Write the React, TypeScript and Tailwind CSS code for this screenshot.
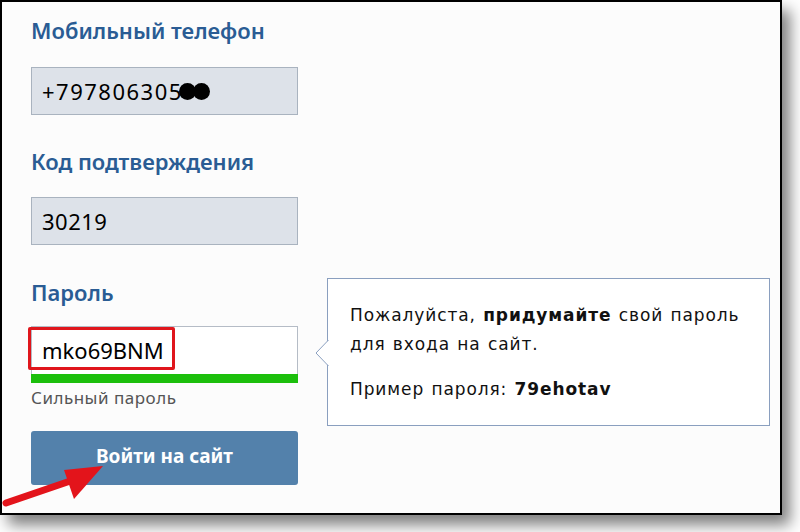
import React from "react";

const labelCls = "text-[22px] leading-[28px] font-semibold text-[#2a5c94]";
const inputCls =
  "w-[267px] h-[48px] border border-[#a9b3bf] bg-[#dde2e9] flex items-center pl-[10px] text-[22px] text-black";

const Arrow = () => (
  <svg className="absolute left-0 top-[455px]" width="110" height="55" viewBox="0 0 110 55">
    <line x1="4" y1="46" x2="80" y2="20" stroke="#e3141b" strokeWidth="7" strokeLinecap="round" />
    <polygon points="101,9 62,13 72,42" fill="#e3141b" />
  </svg>
);

export const App = () => {
  return (
    <div className="w-[800px] h-[532px] bg-white relative overflow-hidden" style={{ fontFamily: '"Noto Sans", "Open Sans", sans-serif' }}>
      <div className="w-[782px] h-[515px] border-2 border-black bg-[#fcfcfc] shadow-[8px_10px_14px_rgba(0,0,0,0.5)] relative">
        <div className="flex flex-col pl-[29px] pt-[14px]">
          <div className={labelCls}>Мобильный телефон</div>
          <div className={`${inputCls} mt-[23px]`}>
            <span className="tracking-[1.5px]">+797806305</span>
            <span className="w-[17px] h-[17px] rounded-full bg-black -ml-[4px]" />
            <span className="w-[17px] h-[17px] rounded-full bg-black -ml-[3px]" />
          </div>

          <div className={`${labelCls} mt-[32px]`}>Код подтверждения</div>
          <div className={`${inputCls} mt-[22px] tracking-[0.5px]`}>30219</div>

          <div className={`${labelCls} mt-[33px]`}>Пароль</div>
          <div className="mt-[20px] w-[267px] relative">
            <div className="h-[48px] border border-[#b5bcc6] border-b-0 bg-white flex items-center pl-[10px] text-[22px] text-black">
              mko69BNM
            </div>
            <div className="h-[9px] bg-[#1cbf0c]" />
            <div className="absolute -left-[3px] top-[1px] w-[147px] h-[43px] border-[3px] border-[#e0161c] rounded-[2px]" />
          </div>
          <div className="mt-[4px] text-[17px] leading-[22px] text-[#555] tracking-[0.5px]">Сильный пароль</div>

          <button className="mt-[22px] w-[267px] h-[54px] rounded-[3px] bg-[#5381ab] text-white text-[19px] font-bold pb-[3px]">
            Войти на сайт
          </button>
        </div>

        <Arrow />

        <div
          className="absolute left-[325px] top-[276px] w-[443px] h-[148px] border border-[#8a9fbf] bg-white pl-[22px] pt-[22px] text-[17px] leading-[29px] text-[#111] tracking-[0.9px] [word-spacing:1px]"
          style={{ fontFamily: '"DejaVu Sans", "Noto Sans", sans-serif' }}
        >
          <svg className="absolute -left-[13px] top-[61px]" width="14" height="28" viewBox="0 0 14 28">
            <polygon points="13.5,0 1,13 13.5,26" fill="white" />
            <polyline points="13.5,0 1,13 13.5,26" fill="none" stroke="#8a9fbf" strokeWidth="1" />
          </svg>
          <p>
            Пожалуйста, <b>придумайте</b> свой пароль
            <br />
            для входа на сайт.
          </p>
          <p className="mt-[16px]">
            Пример пароля: <b>79ehotav</b>
          </p>
        </div>
      </div>
    </div>
  );
};

export default App;
